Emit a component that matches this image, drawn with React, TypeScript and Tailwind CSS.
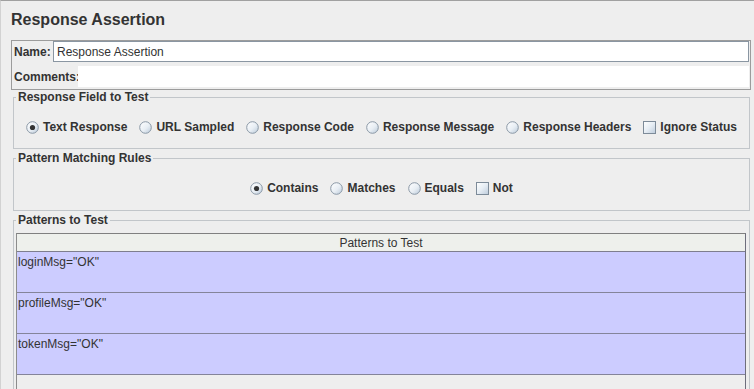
import React from "react";

function Radio({ checked }: { checked?: boolean }) {
  return (
    <svg width="13" height="13" viewBox="0 0 13 13" className="shrink-0">
      <defs>
        <linearGradient id="rg" x1="0" y1="0" x2="1" y2="1">
          <stop offset="0" stopColor="#ffffff" />
          <stop offset="0.55" stopColor="#e8eef4" />
          <stop offset="1" stopColor="#b8c8d8" />
        </linearGradient>
      </defs>
      <circle cx="6.5" cy="6.5" r="5.8" fill="url(#rg)" stroke="#8a98a6" strokeWidth="1" />
      {checked && <circle cx="6.5" cy="6.5" r="2.6" fill="#333333" />}
    </svg>
  );
}

function Check() {
  return (
    <svg width="13" height="13" viewBox="0 0 13 13" className="shrink-0">
      <defs>
        <linearGradient id="cg" x1="0" y1="0" x2="1" y2="1">
          <stop offset="0" stopColor="#ffffff" />
          <stop offset="0.5" stopColor="#e6edf4" />
          <stop offset="1" stopColor="#bccbdb" />
        </linearGradient>
      </defs>
      <rect x="0.5" y="0.5" width="12" height="12" fill="url(#cg)" stroke="#7d8b99" strokeWidth="1" />
    </svg>
  );
}

function Item({ label, kind, checked }: { label: string; kind: "radio" | "check"; checked?: boolean }) {
  return (
    <div className="flex items-center gap-[4px]">
      {kind === "radio" ? <Radio checked={checked} /> : <Check />}
      <span className="font-bold">{label}</span>
    </div>
  );
}

function Titled({ title, children, className }: { title: string; children: React.ReactNode; className?: string }) {
  return (
    <fieldset className={"ml-[12px] w-[737px] border border-[#c2c6ca] " + (className ?? "")}>
      <legend className="ml-[2px] px-[2px] font-bold leading-[14px] text-[#333333]">{title}</legend>
      {children}
    </fieldset>
  );
}

export default function App() {
  const rows = ['loginMsg="OK"', 'profileMsg="OK"', 'tokenMsg="OK"'];
  return (
    <div
      className="w-[754px] h-[389px] overflow-hidden bg-[#eeeeee] border-t border-l border-t-[#a0a0a0] border-l-[#d2d2d2] flex flex-col text-[12px] leading-[14px] text-[#333333]"
      style={{ fontFamily: "'Liberation Sans', Arial, sans-serif" }}
    >
      <div className="pl-[10px] pt-[9px] h-[39px] shrink-0 text-[16px] leading-[20px] font-bold text-[#333333]">
        Response Assertion
      </div>

      <div className="ml-[10px] w-[740px] h-[50px] shrink-0 border border-[#9c9c9c] flex flex-col">
        <div className="flex items-center h-[21px]">
          <span className="w-[41px] pl-[2px] font-bold">Name:</span>
          <div className="flex-1 mr-[1px] h-[21px] border border-[#8a96a2] bg-white pl-[3px] flex items-center">
            Response Assertion
          </div>
        </div>
        <div className="flex items-center h-[21px] mt-[4px]">
          <span className="w-[66px] pl-[2px] font-bold">Comments:</span>
          <div className="flex-1 mr-[1px] h-[21px] bg-white"></div>
        </div>
      </div>

      <Titled title="Response Field to Test" className="h-[59px] shrink-0">
        <div className="flex justify-center gap-[12px] h-[20px] items-center mt-[13px]">
          <Item kind="radio" label="Text Response" checked />
          <Item kind="radio" label="URL Sampled" />
          <Item kind="radio" label="Response Code" />
          <Item kind="radio" label="Response Message" />
          <Item kind="radio" label="Response Headers" />
          <Item kind="check" label="Ignore Status" />
        </div>
      </Titled>

      <Titled title="Pattern Matching Rules" className="h-[60px] mt-[2px] shrink-0">
        <div className="flex justify-center gap-[12px] h-[20px] items-center mt-[13px]">
          <Item kind="radio" label="Contains" checked />
          <Item kind="radio" label="Matches" />
          <Item kind="radio" label="Equals" />
          <Item kind="check" label="Not" />
        </div>
      </Titled>

      <Titled title="Patterns to Test" className="h-[200px] mt-[2px] shrink-0">
        <div className="ml-[2px] mr-[3px] mt-[6px] h-[200px] border-t border-l border-r border-t-[#808080] border-l-[#8c8c8c] border-r-[#6e6e7c] flex flex-col">
          <div className="h-[18px] border-b border-[#7e7e8e] bg-[#eef0ec] flex items-center justify-center text-[#333333]">
            Patterns to Test
          </div>
          {rows.map((r) => (
            <div key={r} className="h-[41px] border-b border-[#84849a] bg-[#ccccff] pl-[1px] pt-[3px]">
              {r}
            </div>
          ))}
        </div>
      </Titled>
    </div>
  );
}
